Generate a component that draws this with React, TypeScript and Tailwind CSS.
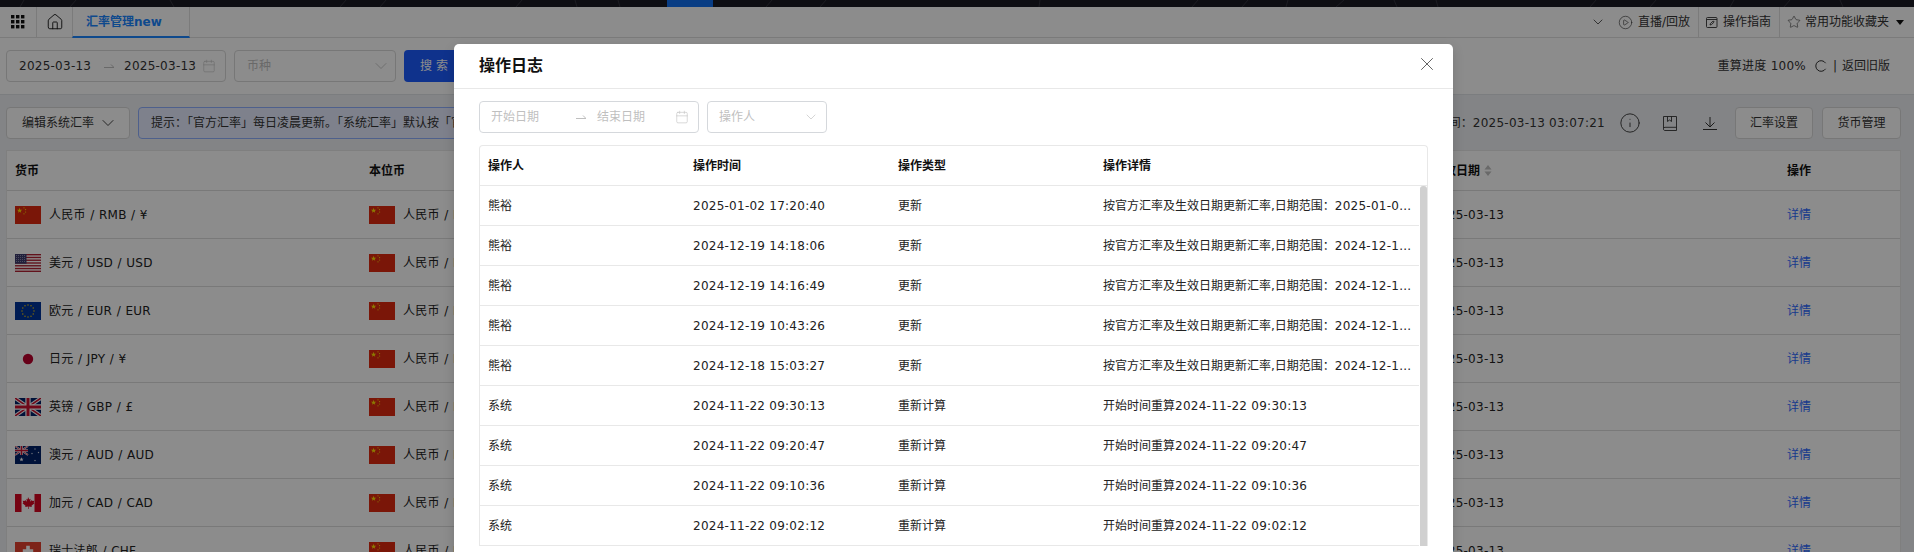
import { Calendar, ChevronDown, CirclePlay, House, Info, Star, X } from "lucide-react";

const HalfArrow = ({ className = "" }: { className?: string }) => (
  <svg viewBox="0 0 10 5" className={`w-[10px] h-[5px] shrink-0 ${className}`} fill="none" stroke="currentColor" strokeWidth="1">
    <path d="M0 3.5H10L7 .5" />
  </svg>
);

const starPoints = (cx: number, cy: number, r: number) =>
  Array.from({ length: 10 }, (_, i) => {
    const rad = i % 2 === 0 ? r : r * 0.42;
    const a = (Math.PI / 5) * i - Math.PI / 2;
    return `${cx + rad * Math.cos(a)},${cy + rad * Math.sin(a)}`;
  }).join(" ");

const MiniUK = ({ w, h }: { w: number; h: number }) => (
  <g>
    <rect width={w} height={h} fill="#012169" />
    <path d={`M0 0L${w} ${h}M${w} 0L0 ${h}`} stroke="#fff" strokeWidth={h / 5} />
    <path d={`M0 0L${w} ${h}M${w} 0L0 ${h}`} stroke="#c8102e" strokeWidth={h / 12} />
    <path d={`M${w / 2} 0V${h}M0 ${h / 2}H${w}`} stroke="#fff" strokeWidth={h / 3.4} />
    <path d={`M${w / 2} 0V${h}M0 ${h / 2}H${w}`} stroke="#c8102e" strokeWidth={h / 6} />
  </g>
);

const Flag = ({ code }: { code: string }) => {
  let body = null;
  if (code === "CN") {
    body = (
      <g>
        <rect width="26" height="18" fill="#de2910" />
        <polygon points={starPoints(4.6, 4.6, 2.8)} fill="#ffde00" />
        <circle cx="9" cy="1.8" r=".6" fill="#ffde00" />
        <circle cx="10.6" cy="3.6" r=".6" fill="#ffde00" />
        <circle cx="10.6" cy="6" r=".6" fill="#ffde00" />
        <circle cx="9" cy="7.8" r=".6" fill="#ffde00" />
      </g>
    );
  } else if (code === "US") {
    body = (
      <g>
        <rect width="26" height="18" fill="#fff" />
        {[0, 1, 2, 3, 4, 5, 6].map((i) => (
          <rect key={i} y={i * 2.77} width="26" height="1.38" fill="#b22234" />
        ))}
        <rect width="11.5" height="9.7" fill="#3c3b6e" />
        {[1.5, 3.5, 5.5, 7.5, 9.5].map((x) =>
          [1.4, 3.4, 5.4, 7.4].map((y) => <circle key={`${x}-${y}`} cx={x} cy={y} r=".45" fill="#fff" />)
        )}
      </g>
    );
  } else if (code === "EU") {
    body = (
      <g>
        <rect width="26" height="18" fill="#003399" />
        {Array.from({ length: 12 }, (_, i) => (
          <circle
            key={i}
            cx={13 + 6 * Math.cos((i * Math.PI) / 6)}
            cy={9 + 6 * Math.sin((i * Math.PI) / 6)}
            r=".7"
            fill="#ffcc00"
          />
        ))}
      </g>
    );
  } else if (code === "JP") {
    body = (
      <g>
        <rect width="26" height="18" fill="#fff" />
        <circle cx="13" cy="9" r="5.2" fill="#bc002d" />
      </g>
    );
  } else if (code === "GB") {
    body = <MiniUK w={26} h={18} />;
  } else if (code === "AU") {
    body = (
      <g>
        <rect width="26" height="18" fill="#012169" />
        <MiniUK w={13} h={9} />
        <polygon points={starPoints(6.5, 13.5, 2.2)} fill="#fff" />
        <polygon points={starPoints(20, 3, 1)} fill="#fff" />
        <polygon points={starPoints(17, 7.5, 1)} fill="#fff" />
        <polygon points={starPoints(23.5, 6.5, 1)} fill="#fff" />
        <polygon points={starPoints(20, 14.5, 1)} fill="#fff" />
      </g>
    );
  } else if (code === "CA") {
    body = (
      <g>
        <rect width="26" height="18" fill="#fff" />
        <rect width="6.5" height="18" fill="#d80621" />
        <rect x="19.5" width="6.5" height="18" fill="#d80621" />
        <path
          d="M13 3l1.3 2.4 1.3-.7-.5 3 1.8-1.8.5 1.2 1.9-.3-.6 2 .8.5-3 2.4.3 1.2-3-.4V15h-.6v-2.5l-3 .4.3-1.2-3-2.4.8-.5-.6-2 1.9.3.5-1.2 1.8 1.8-.5-3 1.3.7z"
          fill="#d80621"
        />
      </g>
    );
  } else {
    body = (
      <g>
        <rect width="26" height="18" fill="#e4412e" />
        <path d="M11.2 3.8h3.6v3.4h3.4v3.6h-3.4v3.4h-3.6v-3.4H7.8V7.2h3.4z" fill="#fff" />
      </g>
    );
  }
  return (
    <svg viewBox="0 0 26 18" className="w-[26px] h-[18px] shrink-0">
      {body}
    </svg>
  );
};

const currencies = [
  { code: "CN", label: "人民币 / RMB / ¥" },
  { code: "US", label: "美元 / USD / USD" },
  { code: "EU", label: "欧元 / EUR / EUR" },
  { code: "JP", label: "日元 / JPY / ¥" },
  { code: "GB", label: "英镑 / GBP / £" },
  { code: "AU", label: "澳元 / AUD / AUD" },
  { code: "CA", label: "加元 / CAD / CAD" },
  { code: "CH", label: "瑞士法郎 / CHF" },
];

const logs = [
  { user: "熊裕", time: "2025-01-02 17:20:40", type: "更新", text: "按官方汇率及生效日期更新汇率,日期范围：", tail: "2025-01-0..." },
  { user: "熊裕", time: "2024-12-19 14:18:06", type: "更新", text: "按官方汇率及生效日期更新汇率,日期范围：", tail: "2024-12-1..." },
  { user: "熊裕", time: "2024-12-19 14:16:49", type: "更新", text: "按官方汇率及生效日期更新汇率,日期范围：", tail: "2024-12-1..." },
  { user: "熊裕", time: "2024-12-19 10:43:26", type: "更新", text: "按官方汇率及生效日期更新汇率,日期范围：", tail: "2024-12-1..." },
  { user: "熊裕", time: "2024-12-18 15:03:27", type: "更新", text: "按官方汇率及生效日期更新汇率,日期范围：", tail: "2024-12-1..." },
  { user: "系统", time: "2024-11-22 09:30:13", type: "重新计算", text: "开始时间重算", tail: "2024-11-22 09:30:13" },
  { user: "系统", time: "2024-11-22 09:20:47", type: "重新计算", text: "开始时间重算", tail: "2024-11-22 09:20:47" },
  { user: "系统", time: "2024-11-22 09:10:36", type: "重新计算", text: "开始时间重算", tail: "2024-11-22 09:10:36" },
  { user: "系统", time: "2024-11-22 09:02:12", type: "重新计算", text: "开始时间重算", tail: "2024-11-22 09:02:12" },
];

const TopBar = () => (
  <div className="h-[7px] bg-[#1b1b24] relative overflow-hidden">
    <svg className="w-full h-[7px]" viewBox="0 0 1914 7" fill="none" stroke="#34343e">
      <path d="M20 7L24 0M70 7L76 0M170 0L174 7M340 7L346 0M380 7L386 0M516 7L522 0M575 0L577 7M618 0L620 7M766 7L772 0M820 7L826 0M1040 0L1039 7M1192 7L1198 0M1242 7L1248 0M1286 7L1288 0M1336 7L1344 0M1394 0L1397 7M1436 0L1438 7M1590 7L1596 0M1650 7L1656 0M1730 7L1734 0M1784 7L1790 0M1840 0L1843 7" />
    </svg>
    <div className="absolute top-0 left-[667px] w-[46px] h-[7px] bg-[#1270f0]" />
  </div>
);

const NavBar = () => (
  <div className="h-[31px] bg-white border-b border-[#e0e0e0] flex items-stretch text-[12px] text-[#333]">
    <div className="w-[37px] border-r border-[#e0e0e0] flex items-center justify-center">
      <svg viewBox="0 0 14 14" className="w-[14px] h-[14px]" fill="#111">
        {[0, 5, 10].map((x) =>
          [0, 5, 10].map((y) => <rect key={`${x}-${y}`} x={x} y={y} width="3.4" height="3.4" />)
        )}
      </svg>
    </div>
    <div className="w-[35px] flex items-center justify-center">
      <House size={18} strokeWidth={1.2} className="text-[#111]" />
    </div>
    <div className="w-[118px] border-l border-r border-[#e0e0e0] border-b-2 border-b-[#1a86ff] -mb-px pl-[13px] flex items-center font-semibold text-[#1a86ff]">
      汇率管理new
    </div>
    <div className="ml-auto flex items-center">
      <ChevronDown size={16} strokeWidth={1.2} className="mr-[12px]" />
      <CirclePlay size={15} strokeWidth={1} className="mr-[5px]" />
      <span className="pr-2">直播/回放</span>
      <div className="h-full border-l border-[#e0e0e0] pl-[7px] pr-2 flex items-center">
        <svg viewBox="0 0 12 12" className="w-3 h-3 mr-[5px]" fill="none" stroke="currentColor" strokeWidth=".9">
          <rect x=".5" y="1.5" width="10.5" height="10" rx="1" />
          <path d="M1 3.5h10M4 9l.4-1.4L7.2 5l1 1-2.8 2.6z" />
        </svg>
        操作指南
      </div>
      <div className="h-full border-l border-[#e0e0e0] pl-[7px] pr-[10px] flex items-center">
        <Star size={14} strokeWidth={1} className="mr-[4px]" />
        常用功能收藏夹
        <svg viewBox="0 0 8 5" className="w-2 h-[5px] ml-[7px]" fill="#111">
          <path d="M0 0h8L4 5z" />
        </svg>
      </div>
    </div>
  </div>
);

const FilterBar = () => (
  <div className="h-[57px] bg-white border-b border-[#e0e4e8] px-[6px] flex items-center text-[12px] text-[#333]">
    <div className="w-[220px] h-8 border border-[#d9d9d9] rounded-[4px] pl-3 flex items-center whitespace-nowrap tracking-[0.25px]">
      <span className="w-[72px]">2025-03-13</span>
      <HalfArrow className="ml-[13px] text-[#bfbfbf]" />
      <span className="w-[72px] ml-[10px]">2025-03-13</span>
      <Calendar size={14} strokeWidth={1} className="ml-[6px] text-[#bfbfbf]" />
    </div>
    <div className="w-[162px] h-8 ml-2 border border-[#d9d9d9] rounded-[4px] pl-3 pr-1 flex items-center justify-between text-[#bfbfbf]">
      币种
      <ChevronDown size={20} strokeWidth={1} />
    </div>
    <button className="w-[60px] h-8 ml-2 rounded-[4px] bg-[#1c5cff] text-white">搜 索</button>
    <div className="ml-auto pr-[18px] flex items-center">
      <span className="tracking-[0.25px]">重算进度 100%</span>
      <svg viewBox="0 0 12 12" className="w-3 h-3 ml-[9px]" fill="none" stroke="currentColor" strokeWidth="1">
        <path d="M10.6 3.2A5.3 5.3 0 1 0 10.6 8.8" />
      </svg>
      <span className="ml-[6px]">|</span>
      <span className="ml-[5px]">返回旧版</span>
    </div>
  </div>
);

const Toolbar = () => (
  <div className="h-8 mt-3 flex items-center text-[12px] text-[#333]">
    <button className="w-[124px] h-8 shrink-0 bg-white border border-[#d9d9d9] rounded-[4px] pl-[15px] flex items-center gap-1">
      编辑系统汇率
      <ChevronDown size={20} strokeWidth={1.1} />
    </button>
    <div className="flex-1 min-w-0 h-8 ml-2 bg-[#e6ecff] border border-[#8fb0ff] rounded-[4px] px-3 flex items-center mr-[160px]">
      <span className="truncate">提示：「官方汇率」每日凌晨更新。「系统汇率」默认按「官方汇率」的汇率生成，支持手动编辑，编辑后自动重算。</span>
    </div>
    <span className="shrink-0">
      最新更新时间：<span className="tracking-[0.25px]">2025-03-13 03:07:21</span>
    </span>
    <Info size={22} strokeWidth={1} className="ml-[14px] shrink-0" />
    <svg viewBox="0 0 14 15" className="w-[14px] h-[15px] ml-[22px] shrink-0" fill="none" stroke="currentColor" strokeWidth=".9">
      <path d="M.5 12.5V.5h13v14H2a1.5 1.5 0 0 1-1.5-2 1.5 1.5 0 0 1 1.5-1.2h11.5M4.5 .5v5l2-1.5 2 1.5v-5" />
    </svg>
    <svg viewBox="0 0 14 13" className="w-[14px] h-[13px] ml-[26px] shrink-0" fill="none" stroke="currentColor" strokeWidth="1">
      <path d="M7 0v9.5M2.5 5.5L7 10l4.5-4.5M0 12.5h14" />
    </svg>
    <button className="w-[78px] h-8 ml-[18px] shrink-0 bg-white border border-[#d9d9d9] rounded-[4px]">汇率设置</button>
    <button className="w-[79px] h-8 ml-[9px] shrink-0 bg-white border border-[#d9d9d9] rounded-[4px]">货币管理</button>
  </div>
);

const CurrencyTable = () => (
  <div className="mt-[11px] bg-white border border-[#e8e8e8] text-[12px] text-[#222]">
    <div className="h-10 grid grid-cols-[354px_1fr_355px_121px] items-center border-b border-[#dcdcdc] font-semibold text-[#111]">
      <div className="px-2">货币</div>
      <div className="px-2">本位币</div>
      <div className="px-2 flex items-center gap-1">
        生效日期
        <svg viewBox="0 0 8 11" className="w-2 h-[11px]" fill="#bfbfbf">
          <path d="M4 0l3.5 4.5h-7zM4 11L.5 6.5h7z" />
        </svg>
      </div>
      <div className="px-2">操作</div>
    </div>
    {currencies.map((c) => (
      <div key={c.code} className="h-12 grid grid-cols-[354px_1fr_355px_121px] items-center border-b border-[#dcdcdc]">
        <div className="px-2 flex items-center gap-2 tracking-[0.25px] [word-spacing:0.4px]">
          <Flag code={c.code} />
          {c.label}
        </div>
        <div className="px-2 flex items-center gap-2 tracking-[0.25px] [word-spacing:0.4px]">
          <Flag code="CN" />
          人民币 / RMB / ¥
        </div>
        <div className="px-2 tracking-[0.25px]">2025-03-13</div>
        <div className="px-2 text-[#2f6bff]">详情</div>
      </div>
    ))}
  </div>
);

const LogModal = () => (
  <div className="absolute left-[454px] top-[44px] w-[999px] h-[560px] bg-white rounded-t-[5px] shadow-[0_4px_12px_rgba(0,0,0,0.15)] overflow-hidden text-[12px] text-[#222]">
    <div className="h-[45px] border-b border-[#e8e8e8] pl-[25px] pr-[15px] flex items-center justify-between">
      <span className="text-[16px] font-semibold text-[#111]">操作日志</span>
      <X size={22} strokeWidth={1} className="text-[#555] -mt-[5px]" />
    </div>
    <div className="px-[25px] pt-3">
      <div className="flex gap-2 text-[#bfbfbf]">
        <div className="w-[220px] h-8 border border-[#d5d8dc] rounded-[4px] pl-[11px] flex items-center whitespace-nowrap">
          <span className="w-[85px]">开始日期</span>
          <HalfArrow className="text-[#bfbfbf]" />
          <span className="w-[78px] ml-[11px]">结束日期</span>
          <Calendar size={14} strokeWidth={1} />
        </div>
        <div className="w-[120px] h-8 border border-[#d5d8dc] rounded-[4px] pl-[11px] pr-[7px] flex items-center justify-between">
          操作人
          <ChevronDown size={16} strokeWidth={1} />
        </div>
      </div>
      <div className="mt-3 border-l border-r border-t border-[#e8e8e8] rounded-t-[4px]">
        <div className="h-10 grid grid-cols-[205px_205px_205px_1fr] items-center border-b border-[#e8e8e8] font-semibold text-[#111]">
          <div className="px-2">操作人</div>
          <div className="px-2">操作时间</div>
          <div className="px-2">操作类型</div>
          <div className="px-2">操作详情</div>
        </div>
        <div className="flex">
          <div className="flex-1 min-w-0">
            {logs.map((l) => (
              <div key={l.time} className="h-10 grid grid-cols-[205px_205px_205px_1fr] items-center border-b border-[#e8e8e8]">
                <div className="px-2">{l.user}</div>
                <div className="px-2 tracking-[0.25px]">{l.time}</div>
                <div className="px-2">{l.type}</div>
                <div className="px-2 whitespace-nowrap">
                  {l.text}
                  <span className="tracking-[0.25px]">{l.tail}</span>
                </div>
              </div>
            ))}
          </div>
          <div className="w-[7px] ml-px bg-[#d0d0d0] rounded-t-[3px]" />
        </div>
      </div>
    </div>
  </div>
);

export default function App() {
  return (
    <div className="relative h-[552px] overflow-hidden bg-[#eff1f4] font-['DejaVu_Sans','Noto_Sans_CJK_SC',sans-serif]">
      <TopBar />
      <NavBar />
      <FilterBar />
      <div className="px-[6px] pr-[13px]">
        <Toolbar />
        <CurrencyTable />
      </div>
      <div className="absolute inset-0 bg-black/45" />
      <LogModal />
    </div>
  );
}
